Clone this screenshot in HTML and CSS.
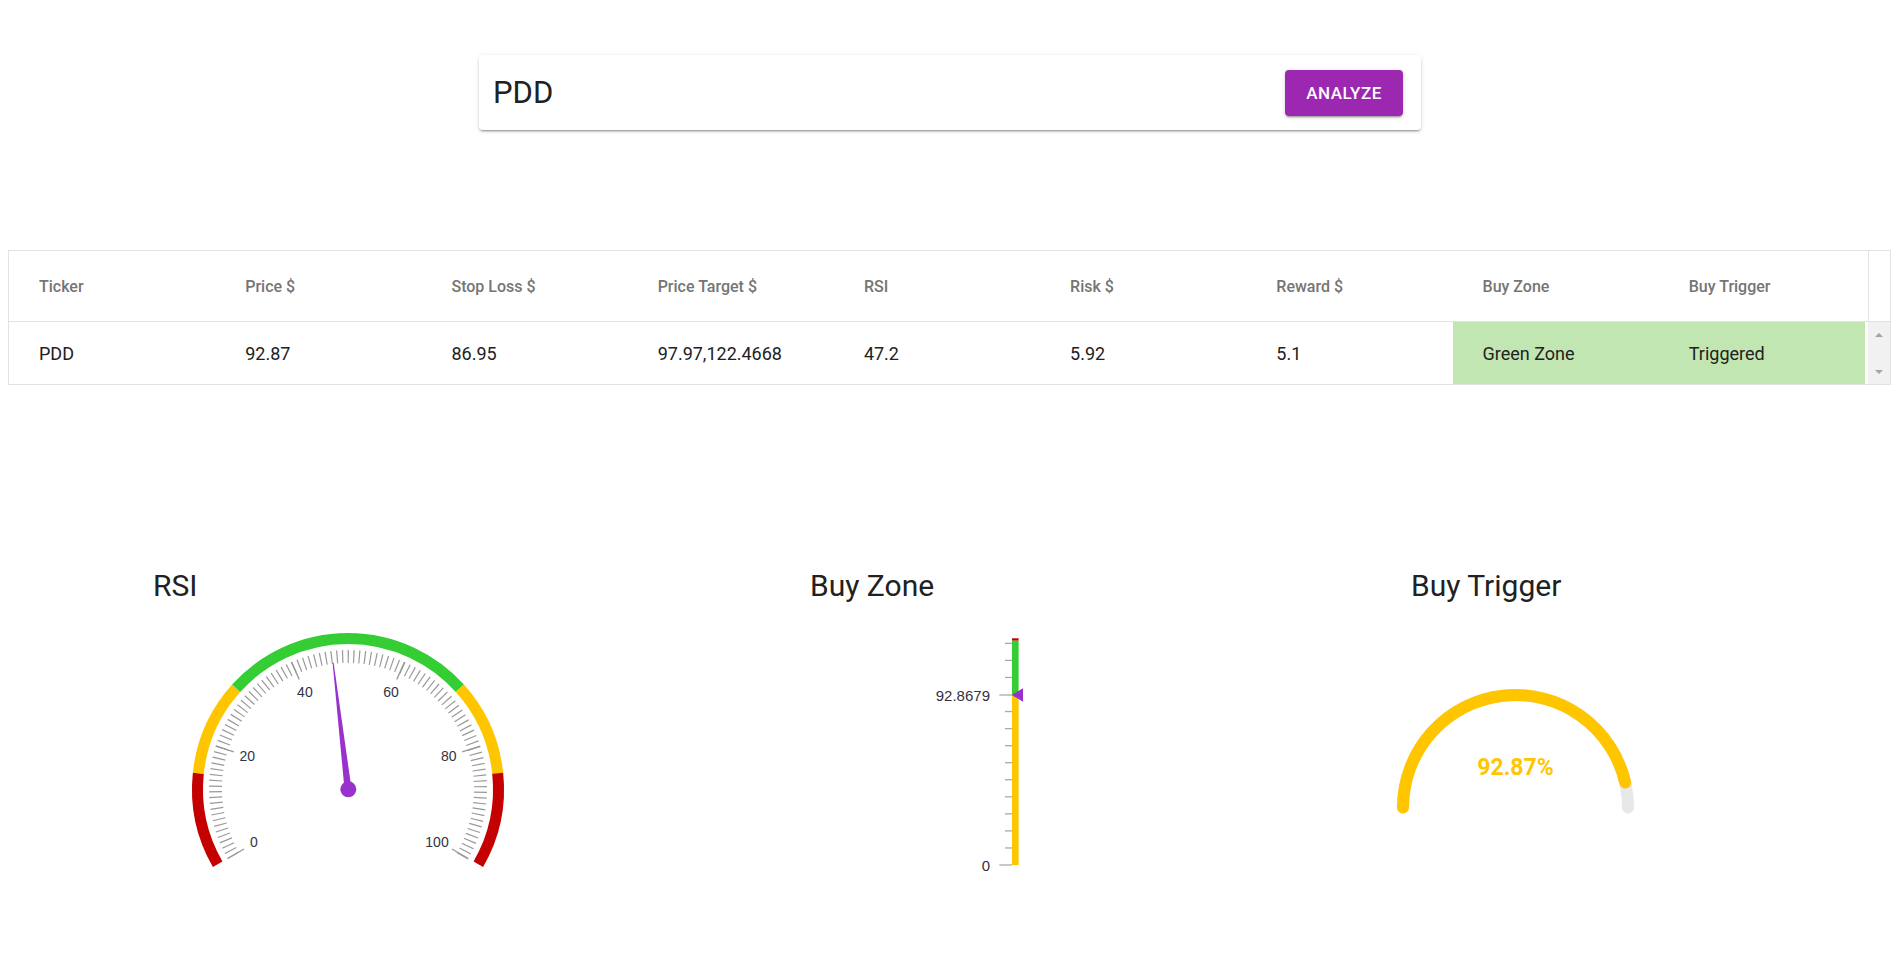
FILE: index.html
```html
<!DOCTYPE html>
<html lang="en">
<head>
<meta charset="utf-8">
<title>Stock Analyzer</title>
<link rel="stylesheet" href="styles.css">
</head>
<body>
<main class="page">
  <section class="search-wrap">
    <div class="search-card">
      <div class="search-input">PDD</div>
      <button class="analyze-btn" type="button">ANALYZE</button>
    </div>
  </section>

  <section class="grid">
    <div class="grid-row grid-head">
      <div class="cell hcell">Ticker</div>
      <div class="cell hcell">Price $</div>
      <div class="cell hcell">Stop Loss $</div>
      <div class="cell hcell">Price Target $</div>
      <div class="cell hcell">RSI</div>
      <div class="cell hcell">Risk $</div>
      <div class="cell hcell">Reward $</div>
      <div class="cell hcell">Buy Zone</div>
      <div class="cell hcell">Buy Trigger</div>
      <div class="head-spacer"></div>
    </div>
    <div class="grid-row grid-body">
      <div class="cell">PDD</div>
      <div class="cell">92.87</div>
      <div class="cell">86.95</div>
      <div class="cell">97.97,122.4668</div>
      <div class="cell">47.2</div>
      <div class="cell">5.92</div>
      <div class="cell">5.1</div>
      <div class="cell green">Green Zone</div>
      <div class="cell green">Triggered</div>
      <div class="vscroll">
        <span class="arrow arrow-up"></span>
        <span class="arrow arrow-down"></span>
      </div>
    </div>
  </section>

  <section class="gauges">
    <div class="gauge-col col-rsi">
      <h2 class="gauge-title">RSI</h2>
      <svg class="gauge-svg svg-rsi" width="340" height="260" viewBox="0 0 340 260">
        <g fill="none" stroke-width="11">
          <path d="M39.66 244.25 A150.5 150.5 0 0 1 20.32 153.27" stroke="#c40000"/>
          <path d="M20.32 153.27 A150.5 150.5 0 0 1 58.16 68.30" stroke="#ffc600"/>
          <path d="M58.16 68.30 A150.5 150.5 0 0 1 281.84 68.30" stroke="#34cd34"/>
          <path d="M281.84 68.30 A150.5 150.5 0 0 1 319.68 153.27" stroke="#ffc600"/>
          <path d="M319.68 153.27 A150.5 150.5 0 0 1 300.34 244.25" stroke="#c40000"/>
        </g>
        <path d="M56.43 237.24 A132.5 132.5 0 1 1 283.57 237.24" fill="none" stroke="#999" stroke-width="13" stroke-dasharray="1.2 4.35015" stroke-dashoffset="-1.7126"/>
        <g stroke="#999" stroke-width="1.3">
          <line x1="66.08" y1="229" x2="49.62" y2="238.5"/>
          <line x1="55.87" y1="131.92" x2="37.80" y2="126.05"/>
          <line x1="121.19" y1="59.37" x2="113.46" y2="42.02"/>
          <line x1="218.81" y1="59.37" x2="226.54" y2="42.02"/>
          <line x1="284.13" y1="131.92" x2="302.20" y2="126.05"/>
          <line x1="273.92" y1="229" x2="290.38" y2="238.5"/>
        </g>
        <g class="tick-label" text-anchor="middle" dominant-baseline="central">
          <text x="76" y="222">0</text>
          <text x="69.2" y="136.2">20</text>
          <text x="126.9" y="72.2">40</text>
          <text x="213.1" y="72.2">60</text>
          <text x="270.8" y="136.2">80</text>
          <text x="259" y="222">100</text>
        </g>
        <polygon points="173.48,168.59 166.52,169.41 154.64,42.93 155.64,42.81" fill="#9932cc"/>
        <circle cx="170.3" cy="169.3" r="8" fill="#9932cc"/>
      </svg>
    </div>

    <div class="gauge-col col-zone">
      <h2 class="gauge-title">Buy Zone</h2>
      <svg class="gauge-svg svg-zone" width="140" height="260" viewBox="0 0 140 260">
        <rect x="112" y="18.3" width="6.6" height="2.4" fill="#c40000"/>
        <rect x="112" y="20.7" width="6.6" height="54.3" fill="#34cd34"/>
        <rect x="112" y="75" width="6.6" height="170" fill="#ffc600"/>
        <g stroke="#aaa" stroke-width="1.3">
          <line x1="105" y1="23.35" x2="112" y2="23.35"/>
          <line x1="105" y1="40.4" x2="112" y2="40.4"/>
          <line x1="105" y1="57.45" x2="112" y2="57.45"/>
          <line x1="99.3" y1="75" x2="112" y2="75"/>
          <line x1="105" y1="91.55" x2="112" y2="91.55"/>
          <line x1="105" y1="108.6" x2="112" y2="108.6"/>
          <line x1="105" y1="125.65" x2="112" y2="125.65"/>
          <line x1="105" y1="142.7" x2="112" y2="142.7"/>
          <line x1="105" y1="159.75" x2="112" y2="159.75"/>
          <line x1="105" y1="176.8" x2="112" y2="176.8"/>
          <line x1="105" y1="193.85" x2="112" y2="193.85"/>
          <line x1="105" y1="210.9" x2="112" y2="210.9"/>
          <line x1="105" y1="227.95" x2="112" y2="227.95"/>
          <line x1="99.3" y1="245" x2="112" y2="245"/>
        </g>
        <g class="zone-label" text-anchor="end" dominant-baseline="central">
          <text x="90" y="75">92.8679</text>
          <text x="90" y="245">0</text>
        </g>
        <polygon points="111.7,75 123,68.3 123,81.7" fill="#9932cc"/>
      </svg>
    </div>

    <div class="gauge-col col-trigger">
      <h2 class="gauge-title">Buy Trigger</h2>
      <svg class="gauge-svg svg-trigger" width="250" height="260" viewBox="0 0 250 260">
        <path d="M13 187.5 A112.5 112.5 0 0 1 238 187.5" fill="none" stroke="#e8e8e8" stroke-width="12" stroke-linecap="round"/>
        <path d="M13 187.5 A112.5 112.5 0 0 1 235.19 162.52" fill="none" stroke="#ffc600" stroke-width="12" stroke-linecap="round"/>
        <text class="trigger-value" x="125.5" y="147" text-anchor="middle" dominant-baseline="central">92.87%</text>
      </svg>
    </div>
  </section>
</main>
</body>
</html>
```

FILE: styles.css
```css
* {
  box-sizing: border-box;
}

body {
  margin: 0;
  background: #ffffff;
  color: #212121;
  font-family: Roboto, "Noto Sans", Arial, sans-serif;
}

/* ---------- search ---------- */
.search-wrap {
  padding-top: 55px;
}

.search-card {
  width: 942px;
  height: 75px;
  margin-left: 479px;
  display: flex;
  align-items: center;
  justify-content: space-between;
  padding: 0 18px 0 14px;
  background: #ffffff;
  border-radius: 4px;
  box-shadow: 0 3px 1px -2px rgba(0, 0, 0, 0.2), 0 2px 2px 0 rgba(0, 0, 0, 0.14), 0 1px 5px 0 rgba(0, 0, 0, 0.12);
}

.search-input {
  font-size: 31px;
  color: #212121;
}

.analyze-btn {
  width: 118px;
  height: 46px;
  border: 0;
  border-radius: 4px;
  background: #9c27b0;
  color: #ffffff;
  font-family: Roboto, Arial, sans-serif;
  font-size: 17px;
  font-weight: 500;
  letter-spacing: 0.5px;
  box-shadow: 0 3px 1px -2px rgba(0, 0, 0, 0.2), 0 2px 2px 0 rgba(0, 0, 0, 0.14), 0 1px 5px 0 rgba(0, 0, 0, 0.12);
}

/* ---------- grid ---------- */
.grid {
  margin: 120px 5px 0 8px;
  border: 1px solid #e2e2e2;
}

.grid-row {
  display: flex;
}

.grid-head {
  height: 71px;
  border-bottom: 1px solid #e2e2e2;
}

.grid-body {
  height: 62px;
}

.cell {
  flex: 1 1 0;
  min-width: 0;
  display: flex;
  align-items: center;
  padding-left: 30px;
  font-size: 18px;
  color: #212121;
  white-space: nowrap;
}

.hcell {
  font-size: 16px;
  font-weight: 500;
  color: #757575;
}

.green {
  background: #c2e6b1;
}

.head-spacer {
  flex: 0 0 22px;
  margin-left: 3px;
  border-left: 1px solid #e2e2e2;
}

.vscroll {
  flex: 0 0 22px;
  margin-left: 3px;
  background: #f1f1f1;
  position: relative;
}

.arrow {
  position: absolute;
  left: 7px;
  width: 0;
  height: 0;
  border-left: 4px solid transparent;
  border-right: 4px solid transparent;
}

.arrow-up {
  top: 11px;
  border-bottom: 4px solid #a3a3a3;
}

.arrow-down {
  top: 48px;
  border-top: 4px solid #a3a3a3;
}

/* ---------- gauges ---------- */
.gauges {
  margin-top: 183px;
  display: grid;
  grid-template-columns: repeat(3, 1fr);
}

.gauge-col {
  display: flex;
  flex-direction: column;
  align-items: flex-start;
}

.gauge-title {
  margin: 0;
  font-size: 30px;
  font-weight: 400;
  line-height: 35px;
  color: #212121;
}

.gauge-svg {
  display: block;
  margin-top: 17px;
}

.col-rsi .gauge-title {
  margin-left: 153px;
}

.col-rsi .gauge-svg {
  margin-left: 178px;
}

.col-zone .gauge-title {
  margin-left: 178px;
}

.col-zone .gauge-svg {
  margin-left: 268px;
}

.col-trigger .gauge-title {
  margin-left: 147px;
}

.col-trigger .gauge-svg {
  margin-left: 126px;
}

.tick-label text {
  font-family: "Liberation Sans", Arial, sans-serif;
  font-size: 14px;
  fill: #333344;
}

.zone-label text {
  font-family: "Liberation Sans", Arial, sans-serif;
  font-size: 15px;
  fill: #333344;
}

.trigger-value {
  font-family: Roboto, Arial, sans-serif;
  font-size: 23px;
  font-weight: 700;
  fill: #ffc600;
}
```
